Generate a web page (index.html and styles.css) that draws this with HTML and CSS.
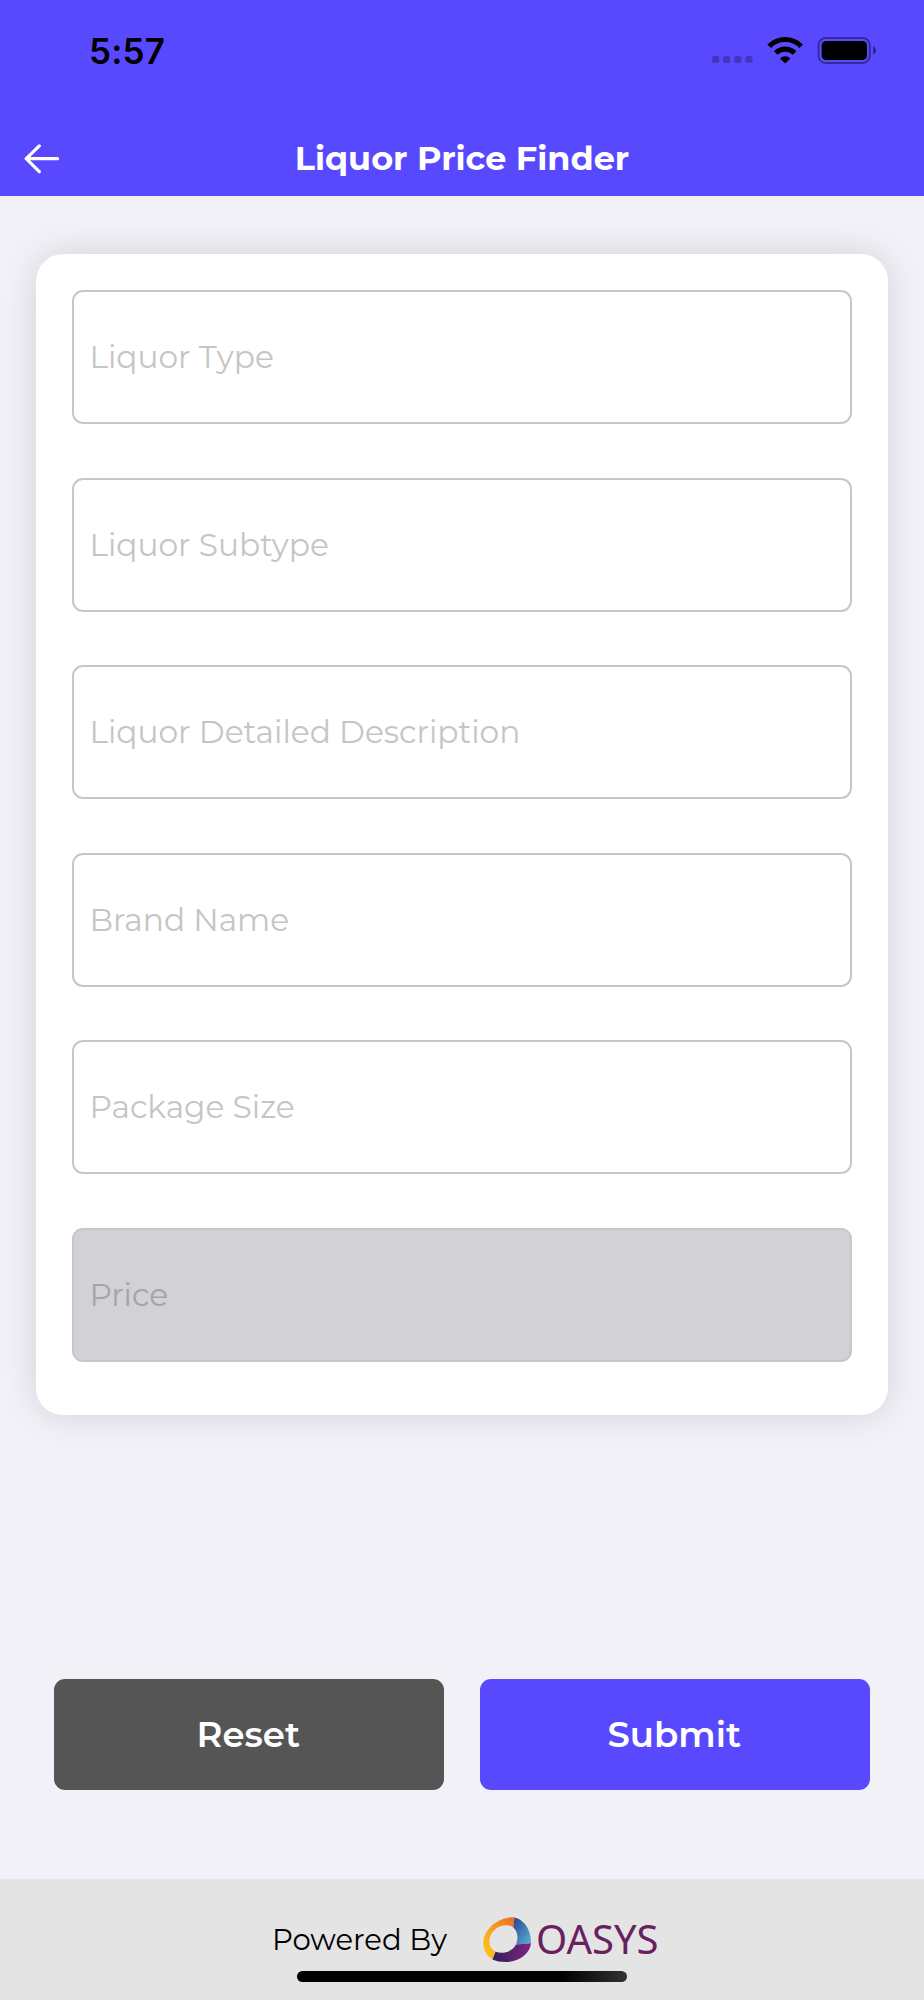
FILE: index.html
```html
<!DOCTYPE html>
<html lang="en">
<head>
<meta charset="utf-8">
<title>Liquor Price Finder</title>
<link rel="stylesheet" href="styles.css">
</head>
<body>
<div class="screen">
  <header class="header">
    <div class="status">
      <span class="time">5:57</span>
      <svg class="status-icons" width="166" height="28" viewBox="0 0 166 28">
        <g fill="#000" fill-opacity=".25">
          <rect x="0" y="20" width="7.2" height="7" rx="1.8"/>
          <rect x="11.1" y="20" width="7.2" height="7" rx="1.8"/>
          <rect x="22.3" y="20" width="7.2" height="7" rx="1.8"/>
          <rect x="33.4" y="20" width="7.2" height="7" rx="1.8"/>
        </g>
        <g fill="none" stroke="#000" stroke-width="5.2">
          <path d="M57.200 10.200A22.400 22.400 0 0 1 89.200 10.200"/>
          <path d="M63.800 17A13.400 13.400 0 0 1 82.600 17"/>
        </g>
        <path d="M73.200 27.500L68 22.400A7.500 7.500 0 0 1 78.400 22.400Z"/>
        <rect x="106.500" y="2" width="51.300" height="25" rx="7" fill="none" stroke="#000" stroke-opacity=".4" stroke-width="1.900"/>
        <rect x="109.700" y="5" width="45.200" height="19" rx="4.300"/>
        <path d="M161 10.200Q164.100 11.700 164.100 14.500T161 18.800Z" fill-opacity=".45"/>
      </svg>
    </div>
    <div class="nav">
      <svg class="back" width="36" height="30" viewBox="0 0 36 30" fill="none" stroke="#fff" stroke-width="3.2" stroke-linecap="round" stroke-linejoin="round"><path d="M33.500 14.700H2.200M15.300 1.900L2.200 14.700L15.300 27.700"/></svg>
      <h1 class="title">Liquor Price Finder</h1>
    </div>
  </header>
  <main class="main">
    <section class="card">
      <div class="field">Liquor Type</div>
      <div class="field">Liquor Subtype</div>
      <div class="field">Liquor Detailed Description</div>
      <div class="field">Brand Name</div>
      <div class="field">Package Size</div>
      <div class="field disabled">Price</div>
    </section>
    <div class="actions">
      <button class="btn reset">Reset</button>
      <button class="btn submit">Submit</button>
    </div>
  </main>
  <footer class="footer">
    <div class="brand">
      <span class="powered">Powered By</span>
      <div class="logo">
        <svg width="50" height="48" viewBox="0 0 50 48">
          <defs>
            <linearGradient id="warm" x1="0" y1="1" x2="1" y2="0"><stop offset="0" stop-color="#ffcd10"/><stop offset=".45" stop-color="#f5a623"/><stop offset="1" stop-color="#ee6a22"/></linearGradient>
            <linearGradient id="blue" x1="0" y1="0" x2="1" y2="1"><stop offset="0" stop-color="#29418c"/><stop offset="1" stop-color="#58b4dc"/></linearGradient>
            <linearGradient id="plum" x1="0" y1="0" x2="1" y2="0"><stop offset="0" stop-color="#30205f"/><stop offset="1" stop-color="#80247f"/></linearGradient>
          </defs>
          <path fill="url(#warm)" d="M32.500 1.500C20 0 4.500 10 1.700 23C0 32 4 40 10.500 43.500L13.500 35.700C9 33.500 6.500 29 7.500 23C9 15 16 9.300 24 9.200C27 9.300 29.500 10 31.300 11.500Z"/>
          <path fill="url(#blue)" d="M32.500 1.500C42.500 3.500 49.500 15 49 27.300L34 28.500C36.500 23 36 15.500 31.300 11.500Z"/>
          <path fill="url(#plum)" d="M49 27.300C48 37.500 37 46 24 46C18.500 46 14 45.200 10.500 43.500L13.500 35.700C21.500 38.500 30.500 35.500 34 28.500Z"/>
        </svg>
        <span class="logo-text">OASYS</span>
      </div>
    </div>
    <div class="home"></div>
  </footer>
</div>
</body>
</html>
```
FILE: styles.css
```css
* { box-sizing: border-box; }
body { margin: 0; background: #f2f1f7; font-family: "Montserrat", Inter, sans-serif; }
.screen { width: 924px; height: 2000px; display: flex; flex-direction: column; overflow: hidden; }
.header { height: 196.4px; flex: none; background: #5849ff; }
.status { height: 119px; display: flex; justify-content: space-between; padding: 29px 46px 0 89px; }
.time { font-family: Inter, sans-serif; font-size: 35px; line-height: 44px; font-weight: 600; letter-spacing: .2px; }
.status-icons { margin-top: 7px; }
.nav { height: 77px; display: grid; grid-template-columns: 60px 1fr 60px; align-items: center; padding: 0 24px; }
.back { margin-top: 2px; }
.title { margin: 0; text-align: center; color: #fff; font-size: 33.5px; line-height: 44px; font-weight: 700; white-space: nowrap; }
.main { flex: 1; padding: 58.1px 36px 0; }
.card { height: 1160.5px; border-radius: 27px; background: #fff; padding: 36px; display: flex; flex-direction: column; gap: 53.5px; box-shadow: 0 0 36px rgba(20, 18, 30, .13); }
.field { height: 134px; flex: none; border: 2px solid #c7c6cc; border-radius: 11px; padding: 0 15.5px; display: flex; align-items: center; color: #c5c5c5; font-size: 31.25px; font-weight: 400; white-space: nowrap; }
.disabled { background: #d2d1d6; color: #a5a4a9; }
.actions { display: flex; gap: 36px; padding: 263.7px 18px 0; }
.btn { flex: 1; height: 111.5px; border: 0; border-radius: 11px; padding: 0 1.5px 0 0; color: #fff; font-family: inherit; font-size: 35.5px; font-weight: 600; }
.reset { background: #555; }
.submit { background: #5849ff; }
.footer { height: 121px; flex: none; background: #e4e4e4; display: flex; flex-direction: column; align-items: center; }
.brand { width: 394px; height: 92px; flex: none; display: flex; align-items: flex-start; justify-content: space-between; padding-top: 37px; margin-left: 14px; }
.powered { font-size: 29.1px; line-height: 48px; font-weight: 400; white-space: nowrap; }
.logo { width: 184px; height: 55px; display: flex; gap: 4px; }
.logo-text { font-family: "Noto Sans", sans-serif; font-size: 40px; line-height: 55px; margin-top: -5px; color: #682060; }
.home { width: 330px; height: 11px; border-radius: 6px; background: linear-gradient(90deg, #000 80%, #333); }
```
